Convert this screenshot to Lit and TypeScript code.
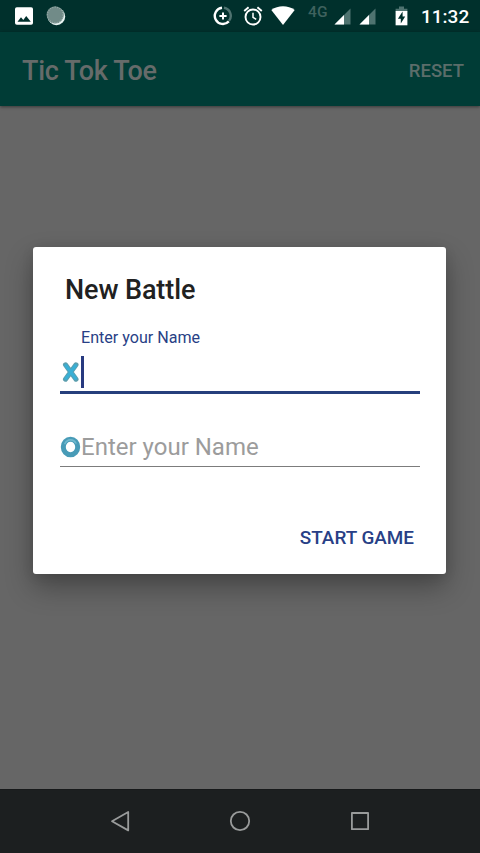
import { LitElement, html, css, svg } from 'lit';
import { customElement, property } from 'lit/decorators.js';

/**
 * Android status bar with notification and system icons.
 */
@customElement('status-bar')
export class StatusBar extends LitElement {
    static styles = css`
        :host {
            display: flex;
            align-items: center;
            height: 32px;
            box-sizing: border-box;
            padding: 0 11px 0 14px;
            background: #00302c;
            color: #fff;
        }

        svg {
            display: block;
            flex: none;
        }

        .moon {
            margin-left: 12px;
        }

        .spacer {
            flex: 1;
        }

        .alarm {
            margin-left: 10px;
        }

        .wifi {
            margin-left: 8px;
        }

        .network {
            align-self: flex-start;
            width: 20px;
            margin: 4px 0 0 13px;
            color: #3f625e;
            font-size: 15.5px;
            font-weight: 500;
            line-height: 17px;
            letter-spacing: 0.3px;
        }

        .signal {
            margin: 1px 0 0 6px;
        }

        .signal + .signal {
            margin-left: 8px;
        }

        .battery {
            margin-left: 19px;
        }

        .time {
            width: 48px;
            margin-left: 13px;
            font-size: 19px;
            font-weight: 500;
            line-height: 33px;
            white-space: nowrap;
        }
    `;

    private _signal() {
        return html`
            <svg class="signal" width="17" height="17" viewBox="0 0 17 17">
                <path d="M16.5 0.5V16.5H0.5z" fill="#4f7370" />
                <path d="M10 7V16.5H0.5z" fill="#fff" />
            </svg>
        `;
    }

    render() {
        return html`
            <svg width="20" height="18" viewBox="0 0 20 18">
                <rect x="1" y="0.3" width="18" height="17.4" rx="1.8" fill="#fff" />
                <path d="M3.5 14.8L7 10.3L9.3 13L12.2 9L16.8 14.8z" fill="#00302c" />
            </svg>
            <svg class="moon" width="20" height="20" viewBox="0 0 20 20">
                <circle cx="10.4" cy="10.4" r="8.8" fill="#e8f4f2" />
                <circle cx="9.2" cy="8.9" r="8.6" fill="#718b88" />
                <circle cx="9.2" cy="8.9" r="7.8" fill="none" stroke="#96aaa7" stroke-width="1.2" stroke-dasharray="1 1.4" />
            </svg>
            <div class="spacer"></div>
            <svg width="20" height="20" viewBox="0 0 20 20" fill="none" stroke-width="2.4">
                <path d="M11 1.8A8.1 8.1 0 0 1 16 14.8" stroke="#4f7370" />
                <path d="M9 1.8A8.1 8.1 0 1 0 15.8 15.4" stroke="#fff" />
                <path d="M10 6.4v7.2M6.4 10h7.2" stroke="#fff" stroke-width="2" />
            </svg>
            <svg class="alarm" width="20" height="20" viewBox="0 0 20 20" fill="none" stroke="#fff">
                <circle cx="10" cy="11" r="7.5" stroke-width="1.9" />
                <path d="M10 6.8V11.4L13.2 13.3" stroke-width="1.5" />
                <path d="M1.2 5L5.6 1.3M18.8 5L14.4 1.3" stroke-width="1.9" />
            </svg>
            <svg class="wifi" width="24" height="20" viewBox="0 0 24 20">
                <path d="M0.3 4C7 -0.9 17 -0.9 23.7 4L12 18.9z" fill="#fff" />
            </svg>
            <span class="network">4G</span>
            ${this._signal()}
            ${this._signal()}
            <svg class="battery" width="13" height="20" viewBox="0 0 13 20">
                <path d="M4 0.5h5v2.2h3.4V5.5H0.6V2.7H4z" fill="#4f7370" />
                <path d="M0.6 5h11.8v14.3H0.6z" fill="#fff" />
                <path d="M7.6 5.4L2.9 12.7H5.8V17.5L10.2 10.5H7.6z" fill="#00302c" />
            </svg>
            <span class="time">11:32</span>
        `;
    }
}

/**
 * Text field with a player mark in front of the input line.
 */
@customElement('player-field')
export class PlayerField extends LitElement {
    static styles = css`
        :host {
            display: block;
        }

        .label {
            height: 20px;
            padding: 0 0 6px 21px;
            color: #283f86;
            font-size: 16.1px;
            line-height: 19px;
        }

        .line {
            display: flex;
            align-items: center;
            height: 38px;
            border-bottom: 1px solid #7c7c7c;
        }

        .line.active {
            height: 40px;
            padding-bottom: 1px;
            border-bottom: 3px solid #263f7c;
            box-sizing: border-box;
        }

        svg {
            display: block;
            flex: none;
        }

        .cursor {
            width: 3px;
            height: 32px;
            background: #283a80;
        }

        .hint {
            color: #9c9c9c;
            font-size: 24px;
            line-height: 36px;
        }
    `;

    @property({ type: String })
    mark: string = 'x';

    @property({ type: String })
    label: string = '';

    @property({ type: Boolean })
    active: boolean = false;

    private _mark() {
        if (this.mark === 'x') {
            return svg`
                <path d="M5.5 4.8L16 19.2M16 4.8L5.5 19.2" stroke="#5b9eae" stroke-width="5" />
                <path d="M5.9 5.5L15.6 18.5M15.6 5.5L5.9 18.5" stroke="#39afd5" stroke-width="3" />
            `;
        }
        return svg`
            <ellipse cx="10.5" cy="12" rx="7.2" ry="7.8" stroke="#489bb7" stroke-width="5" />
            <path d="M5 8.5C7 4 13.5 3.5 15.8 8" stroke="#70b9ce" stroke-width="1.6" />
        `;
    }

    render() {
        return html`
            ${this.active ? html`<div class="label">${this.label}</div>` : ''}
            <div class="line ${this.active ? 'active' : ''}">
                <svg width="21" height="24" viewBox="0 0 21 24" fill="none" stroke-linecap="round">
                    ${this._mark()}
                </svg>
                ${this.active
                    ? html`<span class="cursor"></span>`
                    : html`<span class="hint">${this.label}</span>`}
            </div>
        `;
    }
}

@customElement('app-root')
export class AppRoot extends LitElement {
    static styles = css`
        :host {
            display: flex;
            flex-direction: column;
            height: 853px;
            overflow: hidden;
            background: #666;
            font-family: Roboto, sans-serif;
        }

        .toolbar {
            position: relative;
            display: flex;
            align-items: center;
            justify-content: space-between;
            height: 74px;
            padding: 3px 16px 0 22px;
            box-sizing: border-box;
            background: #003c36;
            box-shadow: 0 1px 3px rgba(0, 0, 0, 0.45);
            color: #666b6a;
        }

        .title {
            font-size: 27px;
            font-weight: 500;
            letter-spacing: -0.3px;
        }

        .reset {
            font-size: 18.5px;
            font-weight: 500;
            color: #5b6d6a;
        }

        .content {
            flex: 1;
            padding: 141px 34px 0 33px;
        }

        .dialog {
            display: flex;
            flex-direction: column;
            height: 327px;
            padding: 26px 26px 0 27px;
            box-sizing: border-box;
            border-radius: 3px;
            background: #fff;
            box-shadow: 0 13px 28px rgba(0, 0, 0, 0.32), 0 2px 12px rgba(0, 0, 0, 0.1);
        }

        .heading {
            margin: 0 0 21px 5px;
            color: #212121;
            font-size: 27px;
            font-weight: 500;
            line-height: 35px;
            letter-spacing: -0.1px;
            height: 34px;
        }

        .second {
            margin-top: 34px;
        }

        .start {
            align-self: flex-end;
            margin: 58px 6px 0 0;
            color: #283f86;
            font-size: 18.9px;
            font-weight: 500;
            line-height: 25px;
        }

        .nav {
            display: flex;
            justify-content: center;
            gap: 96px;
            height: 64px;
            padding-top: 20px;
            box-sizing: border-box;
            border-top: 1px solid #17191a;
            background: #1c1f20;
        }
    `;

    render() {
        return html`
            <status-bar></status-bar>
            <div class="toolbar">
                <span class="title">Tic Tok Toe</span>
                <span class="reset">RESET</span>
            </div>
            <div class="content">
                <div class="dialog">
                    <div class="heading">New Battle</div>
                    <player-field mark="x" label="Enter your Name" active></player-field>
                    <player-field class="second" mark="o" label="Enter your Name"></player-field>
                    <div class="start">START GAME</div>
                </div>
            </div>
            <div class="nav">
                <svg width="24" height="24" viewBox="0 0 24 24" fill="none" stroke="#999b9b" stroke-width="1.8" stroke-linejoin="round">
                    <path d="M4 11.2L20.2 2V20.4z" />
                </svg>
                <svg width="24" height="24" viewBox="0 0 24 24" fill="none" stroke="#999b9b" stroke-width="1.8">
                    <circle cx="12" cy="11" r="9.2" />
                </svg>
                <svg width="24" height="24" viewBox="0 0 24 24" fill="none" stroke="#999b9b" stroke-width="1.8" stroke-linejoin="round">
                    <rect x="3.9" y="3" width="16.2" height="16.2" />
                </svg>
            </div>
        `;
    }
}

declare global {
    interface HTMLElementTagNameMap {
        'app-root': AppRoot;
        'player-field': PlayerField;
        'status-bar': StatusBar;
    }
}
